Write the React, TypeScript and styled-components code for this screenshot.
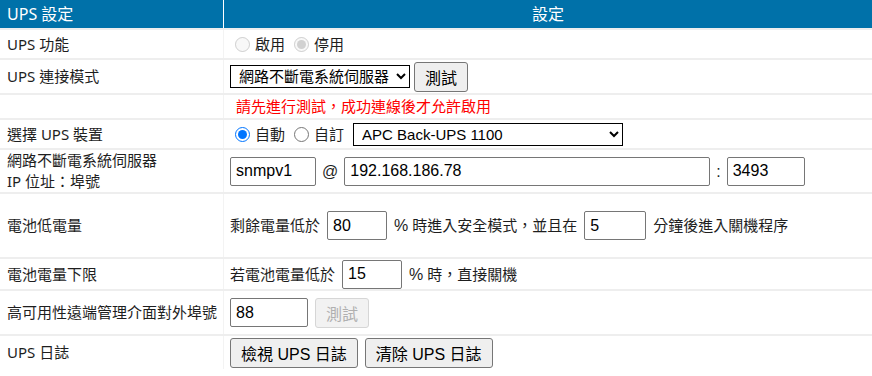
import styled, { createGlobalStyle } from "styled-components";

const GlobalStyle = createGlobalStyle`
  body {
    margin: 0;
    background: #fff;
    font-family: "Noto Sans", "Noto Sans CJK TC", sans-serif;
    color: #1e1e1e;
  }
`;

const Table = styled.table`
  width: 872px;
  border-collapse: collapse;
  table-layout: fixed;
  font-size: 15px;
  line-height: 21px;
`;

const HeadCell = styled.th<{ $center?: boolean }>`
  height: 28px;
  padding: 0 7px;
  background: #0071a9;
  color: #fff;
  font-weight: normal;
  font-size: 16px;
  text-align: ${(p) => (p.$center ? "center" : "left")};
  border-right: 1px solid #fff;
  &:first-child {
    width: 216px;
    padding-right: 0;
  }
  &:last-child {
    border-right: none;
  }
`;

const Row = styled.tr<{ $h: number }>`
  height: ${(p) => p.$h}px;
  td {
    border-top: 2px solid #eeeeee;
    vertical-align: middle;
  }
`;

const LabelCell = styled.td`
  padding: 0 0 0 7px;
  white-space: nowrap;
  border-right: 1px solid #f3f3f3;
`;

const ValueCell = styled.td`
  padding: 0 6px;
`;

const Line = styled.div<{ $gap?: number }>`
  display: flex;
  align-items: center;
  gap: ${(p) => p.$gap ?? 7}px;
  white-space: nowrap;
`;

const TextInput = styled.input<{ $w: number }>`
  box-sizing: border-box;
  width: ${(p) => p.$w}px;
  height: 29px;
  padding: 0 5px;
  border: 1px solid #767676;
  border-radius: 2px;
  font-family: "Liberation Sans", Arial, sans-serif;
  font-size: 16px;
  color: #000;
  background: #fff;
`;

const Select = styled.select<{ $w: number }>`
  box-sizing: border-box;
  width: ${(p) => p.$w}px;
  height: 23px;
  padding: 0 2px 0 4px;
  border: 1px solid #000;
  border-radius: 0;
  font-family: "Liberation Sans", "Noto Sans CJK TC", sans-serif;
  font-size: 15px;
  color: #000;
  background: #fff;
`;

const Button = styled.button`
  box-sizing: border-box;
  height: 30px;
  padding: 0 10px;
  border: 1px solid #767676;
  border-radius: 3px;
  background: #efefef;
  font-family: "Liberation Sans", "Noto Sans CJK TC", sans-serif;
  font-size: 16px;
  color: #000;
  &:disabled {
    color: #b0b0b0;
    border-color: #d6d6d6;
    background: #f2f2f2;
  }
`;

const Radio = styled.label`
  display: inline-flex;
  align-items: center;
  gap: 5px;
  input {
    margin: 0 0 0 5px;
    width: 15px;
    height: 15px;
  }
`;

const Unit = styled.span`
  font-family: "Liberation Sans", Arial, sans-serif;
  font-size: 16px;
`;

const Warning = styled.span`
  color: #ff0000;
  padding-left: 6px;
`;

export default function App() {
  return (
    <>
      <GlobalStyle />
      <Table>
        <thead>
          <tr>
            <HeadCell>UPS 設定</HeadCell>
            <HeadCell $center>設定</HeadCell>
          </tr>
        </thead>
        <tbody>
          <Row $h={30}>
            <LabelCell>UPS 功能</LabelCell>
            <ValueCell>
              <Line $gap={4}>
                <Radio>
                  <input type="radio" name="en" disabled />
                  啟用
                </Radio>
                <Radio>
                  <input type="radio" name="en" disabled defaultChecked />
                  停用
                </Radio>
              </Line>
            </ValueCell>
          </Row>
          <Row $h={35}>
            <LabelCell>UPS 連接模式</LabelCell>
            <ValueCell>
              <Line $gap={4}>
                <Select $w={180} defaultValue="snmp">
                  <option value="snmp">網路不斷電系統伺服器</option>
                </Select>
                <Button>測試</Button>
              </Line>
            </ValueCell>
          </Row>
          <Row $h={25}>
            <LabelCell />
            <ValueCell>
              <Warning>請先進行測試，成功連線後才允許啟用</Warning>
            </ValueCell>
          </Row>
          <Row $h={30}>
            <LabelCell>選擇 UPS 裝置</LabelCell>
            <ValueCell>
              <Line $gap={4}>
                <Radio>
                  <input type="radio" name="dev" defaultChecked />
                  自動
                </Radio>
                <Radio>
                  <input type="radio" name="dev" />
                  自訂
                </Radio>
                <Select $w={270} defaultValue="apc" style={{ marginLeft: 5 }}>
                  <option value="apc">APC Back-UPS 1100</option>
                </Select>
              </Line>
            </ValueCell>
          </Row>
          <Row $h={44}>
            <LabelCell>
              網路不斷電系統伺服器
              <br />
              IP 位址：埠號
            </LabelCell>
            <ValueCell>
              <Line $gap={6}>
                <TextInput $w={86} defaultValue="snmpv1" />
                <Unit>@</Unit>
                <TextInput $w={366} defaultValue="192.168.186.78" />
                <Unit>:</Unit>
                <TextInput $w={78} defaultValue="3493" />
              </Line>
            </ValueCell>
          </Row>
          <Row $h={65}>
            <LabelCell>電池低電量</LabelCell>
            <ValueCell>
              <Line>
                <span>剩餘電量低於</span>
                <TextInput $w={60} defaultValue="80" />
                <span>
                  <Unit>%</Unit> 時進入安全模式，並且在
                </span>
                <TextInput $w={62} defaultValue="5" />
                <span>分鐘後進入關機程序</span>
              </Line>
            </ValueCell>
          </Row>
          <Row $h={32}>
            <LabelCell>電池電量下限</LabelCell>
            <ValueCell>
              <Line>
                <span>若電池電量低於</span>
                <TextInput $w={60} defaultValue="15" />
                <span>
                  <Unit>%</Unit> 時，直接關機
                </span>
              </Line>
            </ValueCell>
          </Row>
          <Row $h={45}>
            <LabelCell>高可用性遠端管理介面對外埠號</LabelCell>
            <ValueCell>
              <Line>
                <TextInput $w={78} defaultValue="88" />
                <Button disabled>測試</Button>
              </Line>
            </ValueCell>
          </Row>
          <Row $h={34}>
            <LabelCell>UPS 日誌</LabelCell>
            <ValueCell>
              <Line>
                <Button>檢視 UPS 日誌</Button>
                <Button>清除 UPS 日誌</Button>
              </Line>
            </ValueCell>
          </Row>
        </tbody>
      </Table>
    </>
  );
}
